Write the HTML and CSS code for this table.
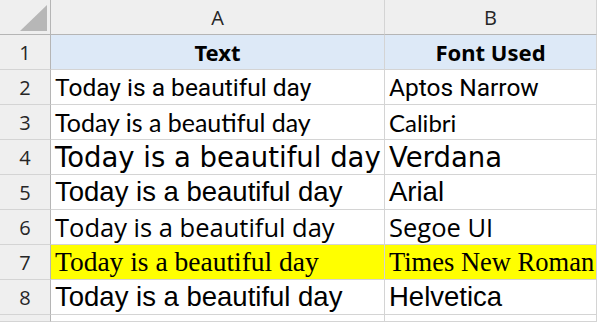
FILE: index.html
```html
<!DOCTYPE html>
<html lang="en">
<head>
<meta charset="utf-8">
<title>Fonts sheet</title>
<link rel="stylesheet" href="styles.css">
</head>
<body>
<div class="sheet">
  <div class="hdr corner">
    <svg class="tri" width="28" height="26" viewBox="0 0 28 26"><polygon points="27,0 27,26 0,26" fill="#b7b7b7"/></svg>
  </div>
  <div class="hdr col">A</div>
  <div class="hdr col">B</div>

  <div class="hdr row">1</div>
  <div class="cell title">Text</div>
  <div class="cell title">Font Used</div>

  <div class="hdr row">2</div>
  <div class="cell f-aptos">Today is a beautiful day</div>
  <div class="cell f-aptos">Aptos Narrow</div>

  <div class="hdr row">3</div>
  <div class="cell f-calibri">Today is a beautiful day</div>
  <div class="cell f-calibri name-calibri">Calibri</div>

  <div class="hdr row">4</div>
  <div class="cell f-verdana">Today is a beautiful day</div>
  <div class="cell f-verdana">Verdana</div>

  <div class="hdr row">5</div>
  <div class="cell f-arial">Today is a beautiful day</div>
  <div class="cell f-arial">Arial</div>

  <div class="hdr row">6</div>
  <div class="cell f-segoe">Today is a beautiful day</div>
  <div class="cell f-segoe">Segoe UI</div>

  <div class="hdr row">7</div>
  <div class="cell f-times hl">Today is a beautiful day</div>
  <div class="cell f-times name-times hl">Times New Roman</div>

  <div class="hdr row">8</div>
  <div class="cell f-arial">Today is a beautiful day</div>
  <div class="cell f-arial">Helvetica</div>

  <div class="hdr row"></div>
  <div class="cell"></div>
  <div class="cell"></div>
</div>
</body>
</html>
```

FILE: styles.css
```css
html, body {
  margin: 0;
  padding: 0;
  background: #ffffff;
  overflow: hidden;
}
body {
  font-family: "Noto Sans", "Liberation Sans", sans-serif;
  color: #000;
}
.sheet {
  display: grid;
  grid-template-columns: 51px 334px 212px;
  grid-template-rows: repeat(9, 35px) 7px;
}
.sheet > div {
  box-sizing: border-box;
  border-right: 1px solid #d4d4d4;
  border-bottom: 1px solid #d4d4d4;
  display: flex;
  align-items: center;
  overflow: hidden;
  white-space: nowrap;
}
.hdr {
  background: #efefef;
  color: #262626;
  font-family: "Open Sans", sans-serif;
  justify-content: center;
}
.hdr.corner, .hdr.col {
  border-bottom: 1px solid #b5b5b5;
}
.hdr.corner, .hdr.row {
  border-right: 1px solid #b5b5b5;
}
.corner {
  position: relative;
}
.corner::after {
  content: "";
  position: absolute;
  left: 0;
  bottom: -1px;
  width: 2px;
  height: 1px;
  background: #000;
}
.tri {
  position: absolute;
  left: 20px;
  top: 5px;
}
.col {
  font-size: 20px;
}
.row {
  font-size: 20px;
}
.cell {
  padding-left: 4px;
  font-size: 27px;
}
.title {
  background: #dde9f7;
  justify-content: center;
  font-weight: bold;
  font-size: 22px;
  padding-left: 0;
}
.hl { background: #ffff00; }
.f-aptos { font-family: "Roboto", sans-serif; font-size: 24.5px; }
.f-calibri { font-family: "Lato", sans-serif; font-size: 25px; }
.f-verdana { font-family: "DejaVu Sans", sans-serif; font-size: 27.5px; }
.f-arial { font-family: "Liberation Sans", Arial, sans-serif; font-size: 27.5px; }
.f-segoe { font-family: "Open Sans", sans-serif; font-size: 25.5px; }
.f-times { font-family: "Liberation Serif", serif; font-size: 27.5px; }
.name-calibri { font-size: 24px; }
.name-times { font-size: 26.5px; }
```
